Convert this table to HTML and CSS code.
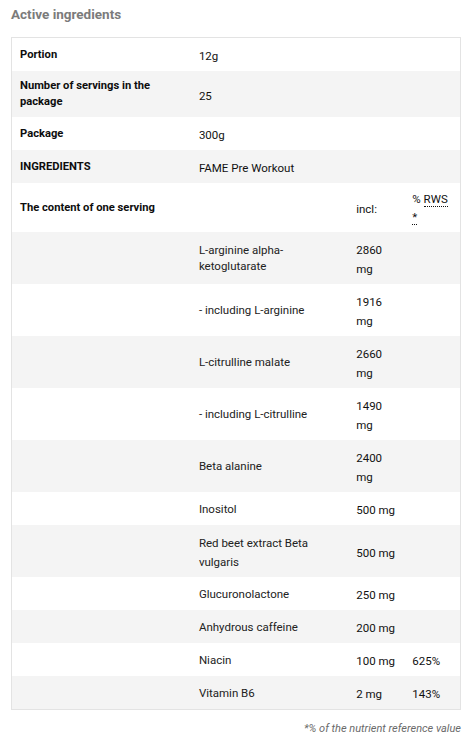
FILE: index.html
```html
<!DOCTYPE html>
<html lang="en">
<head>
<meta charset="utf-8">
<title>Active ingredients</title>
<link rel="stylesheet" href="styles.css">
</head>
<body>
<section class="panel">
  <h2 class="panel-title">Active ingredients</h2>
  <table class="facts">
    <colgroup>
      <col class="col-label">
      <col class="col-name">
      <col class="col-amount">
      <col class="col-rws">
    </colgroup>
    <tbody>
      <tr>
        <th class="c-label">Portion</th>
        <td class="c-val" colspan="3">12g</td>
      </tr>
      <tr class="alt">
        <th class="c-label">Number of servings in the package</th>
        <td class="c-val" colspan="3">25</td>
      </tr>
      <tr>
        <th class="c-label">Package</th>
        <td class="c-val" colspan="3">300g</td>
      </tr>
      <tr class="alt">
        <th class="c-label">INGREDIENTS</th>
        <td class="c-val" colspan="3">FAME Pre Workout</td>
      </tr>
      <tr>
        <th class="c-label">The content of one serving</th>
        <td class="c-name"></td>
        <td class="c-val">incl:</td>
        <td class="c-head">% <abbr title="Reference intake value">RWS *</abbr></td>
      </tr>
      <tr class="alt">
        <td></td>
        <td class="c-name">L-arginine alpha-ketoglutarate</td>
        <td class="c-val">2860 mg</td>
        <td class="c-val"></td>
      </tr>
      <tr>
        <td></td>
        <td class="c-name">- including L-arginine</td>
        <td class="c-val">1916 mg</td>
        <td class="c-val"></td>
      </tr>
      <tr class="alt">
        <td></td>
        <td class="c-name">L-citrulline malate</td>
        <td class="c-val">2660 mg</td>
        <td class="c-val"></td>
      </tr>
      <tr>
        <td></td>
        <td class="c-name">- including L-citrulline</td>
        <td class="c-val">1490 mg</td>
        <td class="c-val"></td>
      </tr>
      <tr class="alt">
        <td></td>
        <td class="c-name">Beta alanine</td>
        <td class="c-val">2400 mg</td>
        <td class="c-val"></td>
      </tr>
      <tr>
        <td></td>
        <td class="c-name">Inositol</td>
        <td class="c-val">500 mg</td>
        <td class="c-val"></td>
      </tr>
      <tr class="alt">
        <td></td>
        <td class="c-name c-name--loose">Red beet extract Beta vulgaris</td>
        <td class="c-val">500 mg</td>
        <td class="c-val"></td>
      </tr>
      <tr>
        <td></td>
        <td class="c-name">Glucuronolactone</td>
        <td class="c-val">250 mg</td>
        <td class="c-val"></td>
      </tr>
      <tr class="alt">
        <td></td>
        <td class="c-name">Anhydrous caffeine</td>
        <td class="c-val">200 mg</td>
        <td class="c-val"></td>
      </tr>
      <tr>
        <td></td>
        <td class="c-name">Niacin</td>
        <td class="c-val">100 mg</td>
        <td class="c-val">625%</td>
      </tr>
      <tr class="alt">
        <td></td>
        <td class="c-name">Vitamin B6</td>
        <td class="c-val">2 mg</td>
        <td class="c-val">143%</td>
      </tr>
    </tbody>
  </table>
  <p class="footnote">*% of the nutrient reference value</p>
</section>
</body>
</html>
```

FILE: styles.css
```css
html, body {
  margin: 0;
  padding: 0;
  background: #ffffff;
}

body {
  font-family: Roboto, "Liberation Sans", Arial, sans-serif;
  color: #1a1a1a;
  font-size: 11.5px;
}

.panel {
  padding: 5px 11px 0 11px;
}

.panel-title {
  margin: 0 0 13px 0;
  font-size: 13.5px;
  line-height: 19px;
  font-weight: 700;
  color: #7b7b7b;
}

.facts {
  width: 450px;
  table-layout: fixed;
  border-collapse: collapse;
  border: 1px solid #e3e3e3;
}

.col-label { width: 179px; }
.col-name { width: 157px; }
.col-amount { width: 56px; }
.col-rws { width: 56px; }

.facts tr.alt {
  background: #f4f4f4;
}

.facts th,
.facts td {
  vertical-align: middle;
  text-align: left;
  padding: 7px 8px;
  line-height: 16px;
}

.c-label {
  font-weight: 700;
  font-size: 11.2px;
  color: #0d0d0d;
}

.c-name {
  color: #222;
}

.facts .c-name--loose {
  padding: 9px 8px 5px;
  line-height: 19px;
}

.facts .c-val {
  padding: 9px 8px 5px;
  line-height: 19px;
  color: #111;
}

.facts .c-head {
  padding: 7px 8px 6px;
  line-height: 18px;
  color: #111;
}

.c-head abbr {
  text-decoration: none;
  border-bottom: 1px dotted #111;
}

.footnote {
  margin: 12px 0 0 0;
  width: 450px;
  text-align: right;
  font-style: italic;
  font-size: 11px;
  line-height: 14px;
  color: #6a6a6a;
}
```
